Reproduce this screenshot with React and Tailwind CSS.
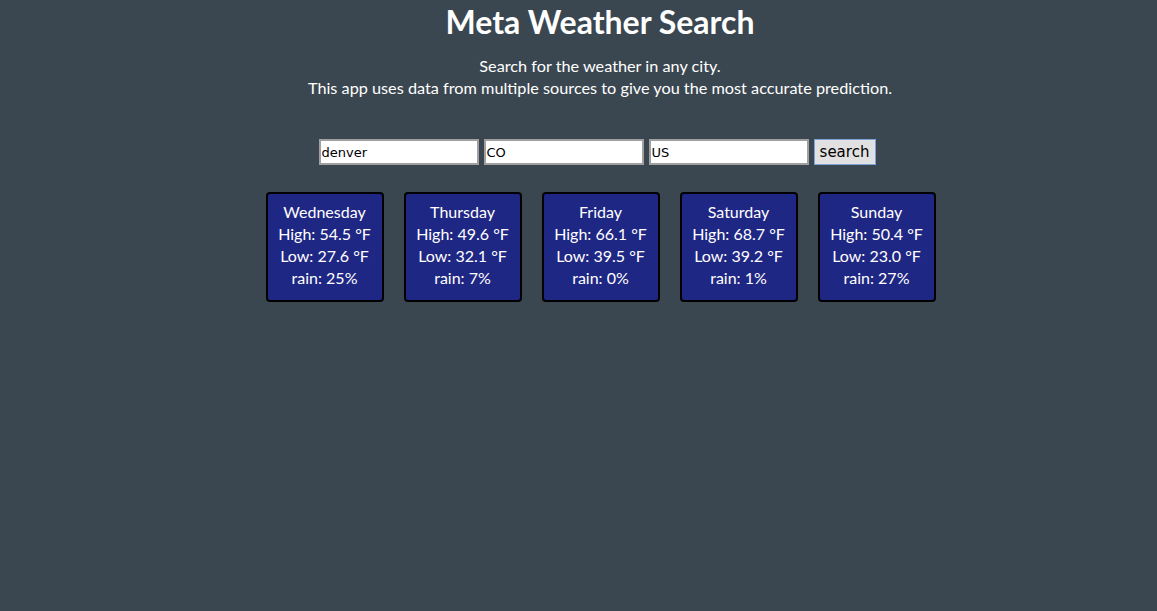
const days = [
  { day: 'Wednesday', high: '54.5', low: '27.6', rain: '25' },
  { day: 'Thursday', high: '49.6', low: '32.1', rain: '7' },
  { day: 'Friday', high: '66.1', low: '39.5', rain: '0' },
  { day: 'Saturday', high: '68.7', low: '39.2', rain: '1' },
  { day: 'Sunday', high: '50.4', low: '23.0', rain: '27' },
];

const inputClass =
  "w-[160px] h-[26px] bg-white text-black border-2 border-[#a0a0a0] px-[1px] text-[13px] font-['DejaVu_Sans',sans-serif] outline-none";

export default function App() {
  return (
    <div className="min-h-screen bg-[#3b4750] pl-[43px] text-white font-['Lato','Noto_Sans',sans-serif] text-center">
      <h1 className="pt-[2px] text-[32px] leading-[40px] font-bold">Meta Weather Search</h1>
      <p className="mt-[13px] text-[16.25px] leading-[22px]">
        Search for the weather in any city.
        <br />
        This app uses data from multiple sources to give you the most accurate prediction.
      </p>

      <div className="mt-[40px] pr-[6px] flex justify-center items-center gap-[5px]">
        <input defaultValue="denver" className={inputClass} />
        <input defaultValue="CO" className={inputClass} />
        <input defaultValue="US" className={inputClass} />
        <button className="w-[62px] h-[26px] bg-[#e1e1e1] text-black border border-[#7ea3d9] text-[15px] font-['DejaVu_Sans',sans-serif] leading-none">
          search
        </button>
      </div>

      <div className="mt-[27px] ml-[1px] flex justify-center gap-[20px]">
        {days.map((d) => (
          <div
            key={d.day}
            className="w-[118px] h-[110px] pt-[7px] bg-[#1f2784] border-2 border-black rounded-[4px] text-[16px] leading-[22px]"
          >
            <div>{d.day}</div>
            <div>High: {d.high} °F</div>
            <div>Low: {d.low} °F</div>
            <div>rain: {d.rain}%</div>
          </div>
        ))}
      </div>
    </div>
  );
}
